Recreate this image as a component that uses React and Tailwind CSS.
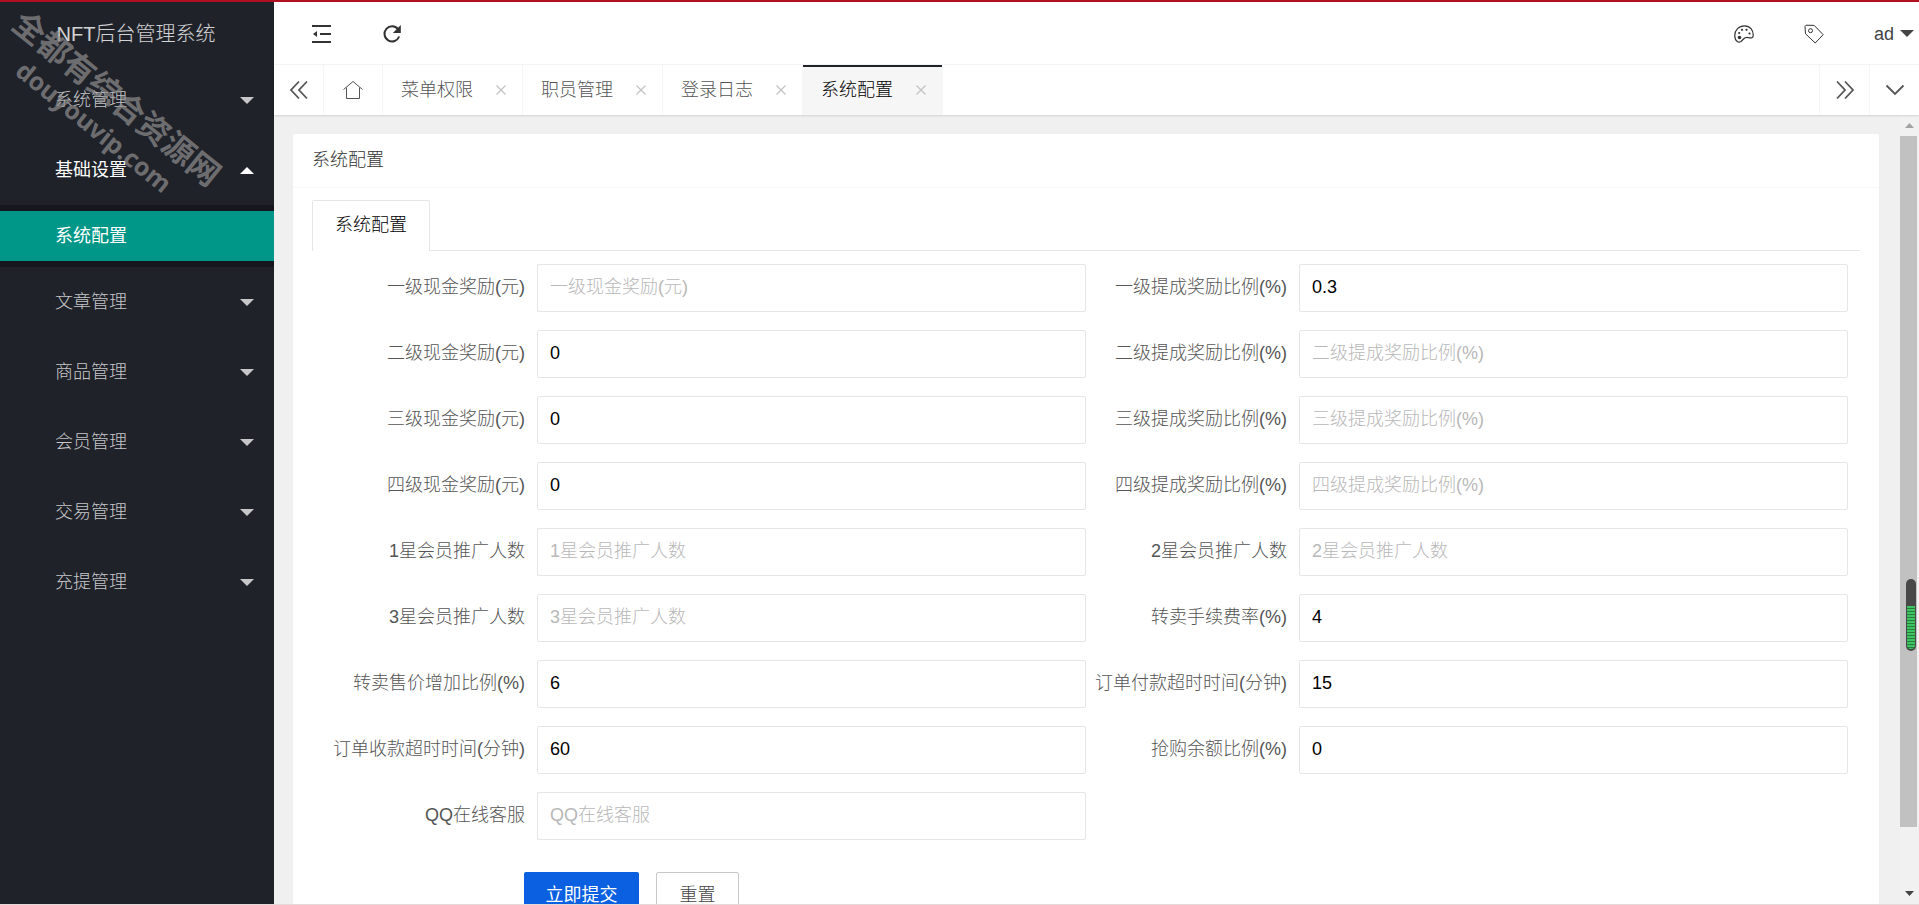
import React, { useState } from "react";

const menus = [
  { name: "系统管理" },
  { name: "基础设置", children: ["系统配置"] },
  { name: "文章管理" },
  { name: "商品管理" },
  { name: "会员管理" },
  { name: "交易管理" },
  { name: "充提管理" },
];

const tabs = ["菜单权限", "职员管理", "登录日志", "系统配置"];

const fields = [
  { label: "一级现金奖励(元)", value: "" },
  { label: "一级提成奖励比例(%)", value: "0.3" },
  { label: "二级现金奖励(元)", value: "0" },
  { label: "二级提成奖励比例(%)", value: "" },
  { label: "三级现金奖励(元)", value: "0" },
  { label: "三级提成奖励比例(%)", value: "" },
  { label: "四级现金奖励(元)", value: "0" },
  { label: "四级提成奖励比例(%)", value: "" },
  { label: "1星会员推广人数", value: "" },
  { label: "2星会员推广人数", value: "" },
  { label: "3星会员推广人数", value: "" },
  { label: "转卖手续费率(%)", value: "4" },
  { label: "转卖售价增加比例(%)", value: "6" },
  { label: "订单付款超时时间(分钟)", value: "15" },
  { label: "订单收款超时时间(分钟)", value: "60" },
  { label: "抢购余额比例(%)", value: "0" },
  { label: "QQ在线客服", value: "" },
];

const Caret = ({ up }) => (
  <svg width="14" height="7" viewBox="0 0 14 7" fill="currentColor">
    <path d={up ? "M0 7 7 0l7 7z" : "M0 0h14L7 7z"} />
  </svg>
);

const Icon = ({ size = 20, width = 1.2, children }) => (
  <svg width={size} height={size} viewBox="0 0 20 20" fill="none" stroke="currentColor" strokeWidth={width}>
    {children}
  </svg>
);

const Sidebar = () => {
  const [open, setOpen] = useState("基础设置");

  return (
    <aside className="relative w-[274px] shrink-0 bg-[#20222a] text-white/75">
      <div className="h-[65px] pt-[2px] flex items-center justify-center pr-[2px] text-xl text-white/80">
        NFT后台管理系统
      </div>
      <nav>
        {menus.map((menu) => {
          const isOpen = open === menu.name && menu.children;
          return (
            <div key={menu.name}>
              <button
                type="button"
                onClick={() => setOpen(isOpen ? "" : menu.name)}
                className={`w-full h-[70px] pl-[55px] pr-5 flex items-center justify-between ${isOpen ? "text-white font-normal" : ""}`}
              >
                {menu.name}
                <Caret up={isOpen} />
              </button>
              {isOpen && (
                <div className="bg-black/30 py-[6px]">
                  {menu.children.map((child) => (
                    <a key={child} href="#" className="flex items-center h-[50px] pl-[55px] bg-[#009688] text-white font-normal">
                      {child}
                    </a>
                  ))}
                </div>
              )}
            </div>
          );
        })}
      </nav>
      <div className="absolute left-[-25px] top-[78px] w-[260px] rotate-[39deg] text-center font-bold leading-[35px] text-[#909090]/70 pointer-events-none whitespace-nowrap">
        <div className="text-[32px]">全都有综合资源网</div>
        <div className="text-[25px] font-['Noto_Sans',sans-serif]">douyouvip.com</div>
      </div>
    </aside>
  );
};

const Header = () => (
  <header className="h-[65px] pt-[3px] pl-[38px] pr-[5px] flex items-center justify-between border-b border-[#f6f6f6] bg-white text-[#333]">
    <div className="flex items-center gap-[50px]">
      <button type="button" aria-label="侧边伸缩">
        <Icon width={2}>
          <path d="M0 2h19M8 10h11M0 18h19" />
          <path d="M1 10l4-3v6z" fill="currentColor" stroke="none" />
        </Icon>
      </button>
      <button type="button" aria-label="刷新">
        <Icon width={2}>
          <path d="M16 5A7.600 7.600 0 1 0 17.200 12.500" />
          <path d="M18.800 1v8h-8z" fill="currentColor" stroke="none" />
        </Icon>
      </button>
    </div>
    <div className="flex items-center">
      <button type="button" aria-label="主题" className="mr-[50px]">
        <Icon>
          <path d="M7 17.500C5 19 1 18 .8 12 .6 6 5 1.800 10.500 1.800c5.500 0 9 4.200 8.700 10-.1 2-1.800 2.400-3.500 2-2.700-.7-4.700-.5-6.200 1.200-.9 1-1.500 1.700-2.500 2.500z" />
          <circle cx="5.500" cy="13.500" r="1.800" fill="currentColor" stroke="none" />
          <g fill="currentColor" stroke="none">
            <circle cx="5.200" cy="9" r="1.100" />
            <circle cx="8" cy="5.800" r="1.100" />
            <circle cx="12.500" cy="5.800" r="1.100" />
            <circle cx="15.500" cy="9.500" r="1.100" />
          </g>
        </Icon>
      </button>
      <button type="button" aria-label="便签" className="mr-[50px]">
        <Icon width={1}>
          <path d="M1 2.500 2 1.200l8.200.2 9 9.300-8 8.300L1.500 9.800z" strokeLinejoin="round" />
          <circle cx="6.500" cy="6.700" r="2" />
        </Icon>
      </button>
      <button type="button" className="flex items-center gap-[6px] text-[#444]">
        ad
        <Caret />
      </button>
    </div>
  </header>
);

const TabBar = () => {
  const [active, setActive] = useState("系统配置");

  return (
    <div className="relative z-10 h-[50px] flex bg-white text-[#555] shadow-[0_1px_2px_rgba(0,0,0,0.12)]">
      <button type="button" aria-label="上一页" className="w-[50px] flex items-center justify-center border-r border-[#f6f6f6]">
        <Icon width={1.8}>
          <path d="M10 1.500 2 10l8 8.500M18 1.500 10 10l8 8.500" />
        </Icon>
      </button>
      <button type="button" aria-label="首页" className="w-[59px] flex items-center justify-center border-r border-[#f6f6f6]">
        <Icon width={1}>
          <path d="M.5 9.500 10 1.500l9.500 8M3.500 7.500v11h13v-11" />
        </Icon>
      </button>
      {tabs.map((tab) => (
        <div
          key={tab}
          className={`w-[140px] flex items-center justify-between pl-[18px] pr-4 border-r border-[#f6f6f6] ${
            active === tab ? "bg-[#f6f6f6] text-black shadow-[inset_0_2px_0_#20222a]" : ""
          }`}
        >
          <button type="button" onClick={() => setActive(tab)}>{tab}</button>
          <button type="button" aria-label="关闭" className="text-[#c2c2c2]">
            <Icon size={10} width={2.4}>
              <path d="M1 1l18 18M19 1 1 19" />
            </Icon>
          </button>
        </div>
      ))}
      <button type="button" aria-label="下一页" className="ml-auto w-[50px] flex items-center justify-center border-l border-[#f6f6f6]">
        <Icon width={1.8}>
          <path d="M2 1.500 10 10l-8 8.500M10 1.500 18 10l-8 8.500" />
        </Icon>
      </button>
      <button type="button" aria-label="更多" className="w-[50px] flex items-center justify-center border-l border-[#f6f6f6]">
        <Icon width={1.8}>
          <path d="M1.500 5.500 10 14l8.500-8.500" />
        </Icon>
      </button>
    </div>
  );
};

const ConfigForm = () => (
  <form className="px-3 pt-[13px]">
    <div className="grid grid-cols-2 gap-y-[18px]">
      {fields.map((field, index) => (
        <div key={field.label} className="flex items-center">
          <label htmlFor={`field-${index}`} className="w-[213px] shrink-0 pr-3 pb-[2px] text-right text-[#555] whitespace-nowrap">
            {field.label}
          </label>
          <input
            id={`field-${index}`}
            type="text"
            defaultValue={field.value}
            placeholder={field.label}
            className="flex-1 min-w-0 h-12 px-3 pb-[2px] border border-[#e6e6e6] rounded-xs bg-white text-black placeholder:text-[#b8b8b8] outline-none"
          />
        </div>
      ))}
    </div>
    <div className="flex gap-[17px] mt-8 pl-[200px] pb-12">
      <button type="submit" className="w-[115px] h-12 pb-[2px] rounded-xs bg-[#0a60e0] text-white font-normal">立即提交</button>
      <button type="reset" className="w-[83px] h-12 pb-[2px] rounded-xs border border-[#c9c9c9] bg-white text-[#444]">重置</button>
    </div>
  </form>
);

const ScrollBar = () => (
  <div className="relative w-[19px] shrink-0 flex flex-col items-center bg-[#f1f1f1]">
    <div className="h-[21px] flex items-center text-[#a3a3a3]">
      <svg width="9" height="5" viewBox="0 0 9 5" fill="currentColor"><path d="M0 5 4.500 0 9 5z" /></svg>
    </div>
    <div className="flex-[692] self-start w-[17px] bg-[#c1c1c1]" />
    <div className="flex-[56]" />
    <div className="h-[21px] flex items-center text-[#444]">
      <svg width="9" height="5" viewBox="0 0 9 5" fill="currentColor"><path d="M0 0h9L4.500 5z" /></svg>
    </div>
    {/* memory meter floating over the scrollbar */}
    <div className="absolute right-[3px] top-[464px] w-[10px] h-[72px] rounded-full overflow-hidden bg-[#484848] px-px pb-[2px] pt-[27px]">
      <div className="h-full rounded-b-full bg-[repeating-linear-gradient(#3fc463_0_2px,#2a7d40_2px_3px)]" />
    </div>
  </div>
);

const App = () => {
  return (
    <div className="relative flex h-screen overflow-hidden text-lg font-light font-['Liberation_Sans','Noto_Sans_CJK_SC',sans-serif] border-b border-[#e5d9d9]">
      <div className="absolute inset-x-0 top-0 z-20 h-[2px] bg-[#b01020]" />
      <Sidebar />
      <div className="flex-1 min-w-0 flex flex-col">
        <Header />
        <TabBar />
        <div className="flex-1 min-h-0 flex bg-[#f0f0f0]">
          <main className="flex-1 min-w-0 overflow-hidden pt-[19px] pl-[19px] pr-[21px]">
            <section className="bg-white rounded-xs">
              <h2 className="h-[54px] px-[19px] pb-[2px] flex items-center border-b border-[#f6f6f6] text-[#333]">系统配置</h2>
              <div className="pt-3 px-[19px]">
                <div className="flex border-b border-[#e6e6e6]">
                  <button type="button" className="w-[118px] h-[51px] -mb-px pb-[2px] border border-b-0 border-[#e6e6e6] rounded-t-xs bg-white text-black">
                    系统配置
                  </button>
                </div>
                <ConfigForm />
              </div>
            </section>
          </main>
          <ScrollBar />
        </div>
      </div>
    </div>
  );
};

export default App;
